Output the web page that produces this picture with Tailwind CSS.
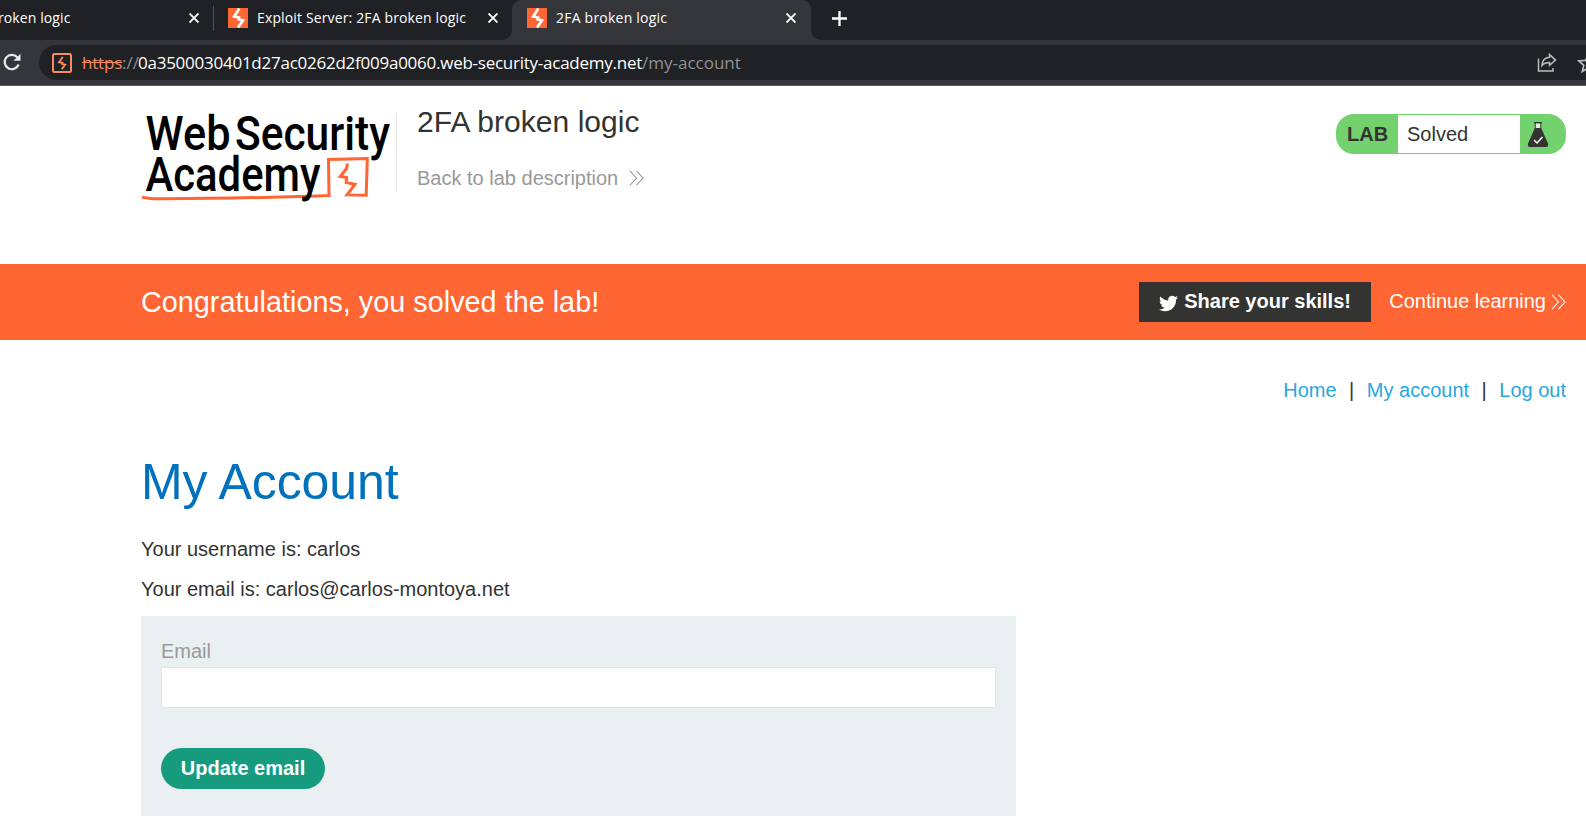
<!DOCTYPE html>
<html lang="en">
<head>
<meta charset="utf-8">
<title>2FA broken logic</title>
<script src="https://cdn.jsdelivr.net/npm/@tailwindcss/browser@4"></script>
</head>
<body class="bg-white w-[1586px] h-[816px] overflow-hidden text-[20px] leading-6 text-[#333332] font-['Liberation_Sans',Arial,sans-serif]">

<svg class="hidden">
  <symbol id="bolt" viewBox="0 0 20 20">
    <path fill="#ff6633" d="M0 0h20v20H0z"/>
    <path fill="none" stroke="#fff" stroke-width="2.700" d="M11.300 .5 6.200 8.500 11 9.500 10.600 11.300 15 12.300 10 19.500"/>
  </symbol>
  <symbol id="close" viewBox="0 0 10 10"><path d="M.5.5l9 9M9.500.5l-9 9" stroke="#fff" stroke-width="1.900" fill="none"/></symbol>
  <symbol id="chev" viewBox="0 0 15 16"><path d="M1 .8 7.500 8 1 15.200M7.500.8 14 8 7.500 15.200" stroke="currentColor" stroke-width="1.100" fill="none"/></symbol>
</svg>

<header class="font-['Open_Sans','Noto_Sans',sans-serif] text-white">
  <div class="h-10 bg-[#202124] flex text-[14px] leading-9">
    <div class="w-[213px] h-9 flex items-center justify-between pr-[14px]">
      <span class="tracking-[0.1px] whitespace-nowrap -ml-0.5">roken logic</span>
      <svg class="w-[10px] h-[10px]"><use href="#close"/></svg>
    </div>
    <div class="w-px h-[25px] mt-1.5 bg-[#4e5054]"></div>
    <div class="w-[288px] h-9 flex items-center pl-[14px] pr-1">
      <svg class="w-5 h-5 shrink-0"><use href="#bolt"/></svg>
      <span class="ml-[9px] w-[231px] tracking-[0.14px] whitespace-nowrap">Exploit Server: 2FA broken logic</span>
      <svg class="w-[10px] h-[10px] shrink-0"><use href="#close"/></svg>
    </div>
    <div class="w-[10px] bg-[#35363a]"><div class="w-full h-full bg-[#202124] rounded-br-[10px]"></div></div>
    <div class="bg-[#202124]"><div class="w-[299px] h-10 bg-[#35363a] rounded-t-[9px]">
      <div class="h-9 flex items-center pl-[15px] pr-[15px]">
        <svg class="w-5 h-5 shrink-0"><use href="#bolt"/></svg>
        <span class="ml-[9px] grow tracking-[0.22px]">2FA broken logic</span>
        <svg class="w-[10px] h-[10px]"><use href="#close"/></svg>
      </div>
    </div></div>
    <div class="w-[10px] bg-[#35363a]"><div class="w-full h-full bg-[#202124] rounded-bl-[10px]"></div></div>
    <svg class="w-[15px] h-[15px] mt-[11px] ml-[11px]" viewBox="0 0 15 15"><path d="M7.500 0v15M0 7.500h15" stroke="#fff" stroke-width="2.300"/></svg>
  </div>
  <div class="h-[46px] bg-[#35363a] border-b border-[#5d5e62] flex pt-[5px]">
    <svg class="w-[39px] h-[35px] shrink-0" viewBox="0 0 39 35"><path d="M17.300 12.300A7.200 7.200 0 1 0 18.600 19.500" fill="none" stroke="#e8eaed" stroke-width="2.200"/><path d="M20.500 8.800v7h-7z" fill="#e8eaed"/></svg>
    <div class="grow h-[35px] bg-[#202124] rounded-l-full flex items-center pl-[13px] text-[17px] leading-[34px] whitespace-nowrap">
      <svg class="w-5 h-5 shrink-0" viewBox="0 0 20 20"><rect x="1" y="1" width="18" height="18" rx="1.500" fill="none" stroke="#f98b61" stroke-width="2"/><path fill="none" stroke="#f98b61" stroke-width="1.900" d="M10.800 4 7 9.300 10.500 9.900 10.300 11.100 13.200 11.600 9.700 16.300"/></svg>
      <span class="ml-[10px] text-[#f28b64] line-through w-[40px] tracking-[-0.2px]">https</span>
      <span class="text-[#8f9194] w-[16px]">://</span>
      <span class="w-[504px] tracking-[-0.25px]">0a3500030401d27ac0262d2f009a0060.web-security-academy.net</span>
      <span class="text-[#8f9194] grow">/my-account</span>
      <svg class="w-[50px] h-[35px] shrink-0" viewBox="0 0 50 35"><g fill="none" stroke="#bcbdbf" stroke-width="1.500"><path d="M2.500 13.500v12.500h14.500v-3"/><path d="M6 20.500c.3-5 3-8 7.500-8.300V9.500l6 5.600-6 5.300v-3c-3.300 0-5.500.7-7.500 3.100z"/><path stroke-width="1.700" d="M52 9.800l-2.500 5.600-6.700.6 5 4.400-1.500 6 5.700-3.400"/></g></svg>
    </div>
  </div>
</header>

<section class="h-[178px] flex pl-[141px] pr-5">
  <svg class="w-[255px] h-[120px] shrink-0" viewBox="141 86 255 120" role="img">
    <path d="M142 197.300 152 198.700C200 199 270 197.500 329 195.500L328.500 159.500 367.300 158.500 366.200 195.200 347 194.900 355 184.300 346.200 182.600 346.500 177.500 340.300 176.500 346.500 168.500 347.500 163.500" fill="none" stroke="#ff6633" stroke-width="3"/>
    <g class="font-['Roboto',sans-serif] font-medium" fill="#000" font-size="48">
      <text x="145.500" y="150" textLength="85" lengthAdjust="spacingAndGlyphs">Web</text>
      <text x="235" y="150" textLength="155" lengthAdjust="spacingAndGlyphs">Security</text>
      <text x="145.500" y="190.500" textLength="175" lengthAdjust="spacingAndGlyphs">Academy</text>
    </g>
  </svg>
  <div class="w-px h-[78px] mt-7 bg-[#e3e3e3]"></div>
  <div class="grow pl-5 pt-[18px]">
    <h2 class="text-[30px] leading-9 tracking-[0.05px]">2FA broken logic</h2>
    <a class="mt-[26px] flex items-center text-[#999]">Back to lab description<svg class="ml-[11px] w-[15px] h-[16px]"><use href="#chev"/></svg></a>
  </div>
  <div class="mt-7 w-[230px] h-10 bg-[#73d26e] rounded-[18px] flex p-px">
    <div class="w-[61px] pl-[10px] pt-[7px] font-bold">LAB</div>
    <div class="w-[122px] bg-white pl-[9px] pt-[7px]">Solved</div>
    <svg class="w-[45px] h-[38px]" viewBox="1520 115 45 38"><path d="M1534 122h8v1.500h-8zM1534.800 123h1v6h-1zM1540.200 123h1v6h-1z" fill="#333332"/><path d="M1535.800 123.500h4.400v4.500h-4.400z" fill="#fff" fill-opacity=".75"/><path d="M1534.800 128h6.400l6.800 15.500q.7 3.500-2 3.500h-16q-2.700 0-2-3.500z" fill="#333332"/><path d="M1534 140l3 3 5.500-6" fill="none" stroke="#fff" stroke-width="1.500"/></svg>
  </div>
</section>

<section class="h-[76px] bg-[#ff6633] text-white flex items-center pl-[141px] pr-5">
  <h4 class="text-[28.750px] leading-9 grow tracking-[0.03px]">Congratulations, you solved the lab!</h4>
  <a class="w-[232px] h-10 bg-[#333332] flex items-center pl-5 pb-0.5 font-bold whitespace-nowrap">
    <svg class="w-[19px] h-[19px] mt-1 mr-[6px]" viewBox="0 0 24 24" fill="#fff"><path d="M23.950 4.570a10 10 0 0 1-2.820.77 4.960 4.960 0 0 0 2.160-2.720c-.95.550-2 .95-3.130 1.180a4.920 4.920 0 0 0-8.380 4.480C7.690 8.090 4.070 6.130 1.640 3.160a4.820 4.820 0 0 0-.67 2.480c0 1.710.87 3.210 2.190 4.100a4.900 4.900 0 0 1-2.230-.62v.06a4.920 4.920 0 0 0 3.950 4.830 5 5 0 0 1-2.210.08 4.940 4.940 0 0 0 4.600 3.420A9.870 9.870 0 0 1 0 19.540a13.990 13.990 0 0 0 7.550 2.210c9.050 0 14-7.500 14-13.980 0-.21 0-.42-.02-.63a9.940 9.940 0 0 0 2.460-2.550z"/></svg>
    Share your skills!
  </a>
  <a class="ml-[18px] pb-0.5 flex items-center whitespace-nowrap">Continue learning<svg class="ml-[5px] mt-0.5 w-[15px] h-[16px]"><use href="#chev"/></svg></a>
</section>

<nav class="mt-[38px] pr-5 flex justify-end text-[#29a7df]">
  <a>Home</a><span class="text-[#333332] mx-[12.500px]">|</span><a>My account</a><span class="text-[#333332] mx-[12.500px]">|</span><a>Log out</a>
</nav>

<main class="pl-[141px]">
  <h1 class="mt-[50px] text-[50px] leading-[60px] tracking-[-0.1px] text-[#0071bc]">My Account</h1>
  <p class="mt-[25px]">Your username is: carlos</p>
  <p class="mt-4">Your email is: carlos@carlos-montoya.net</p>
  <form class="mt-[15px] w-[875px] h-[210px] bg-[#eaeff2] px-5 pt-[23px]">
    <label class="block text-[#999]">Email</label>
    <input class="block mt-1 w-full h-[41px] bg-white border border-[#e4e4e4]">
    <button type="button" class="block mt-10 w-[164px] h-[41px] pb-0.5 rounded-full bg-[#169b7f] text-white font-bold">Update email</button>
  </form>
</main>
</body>
</html>
